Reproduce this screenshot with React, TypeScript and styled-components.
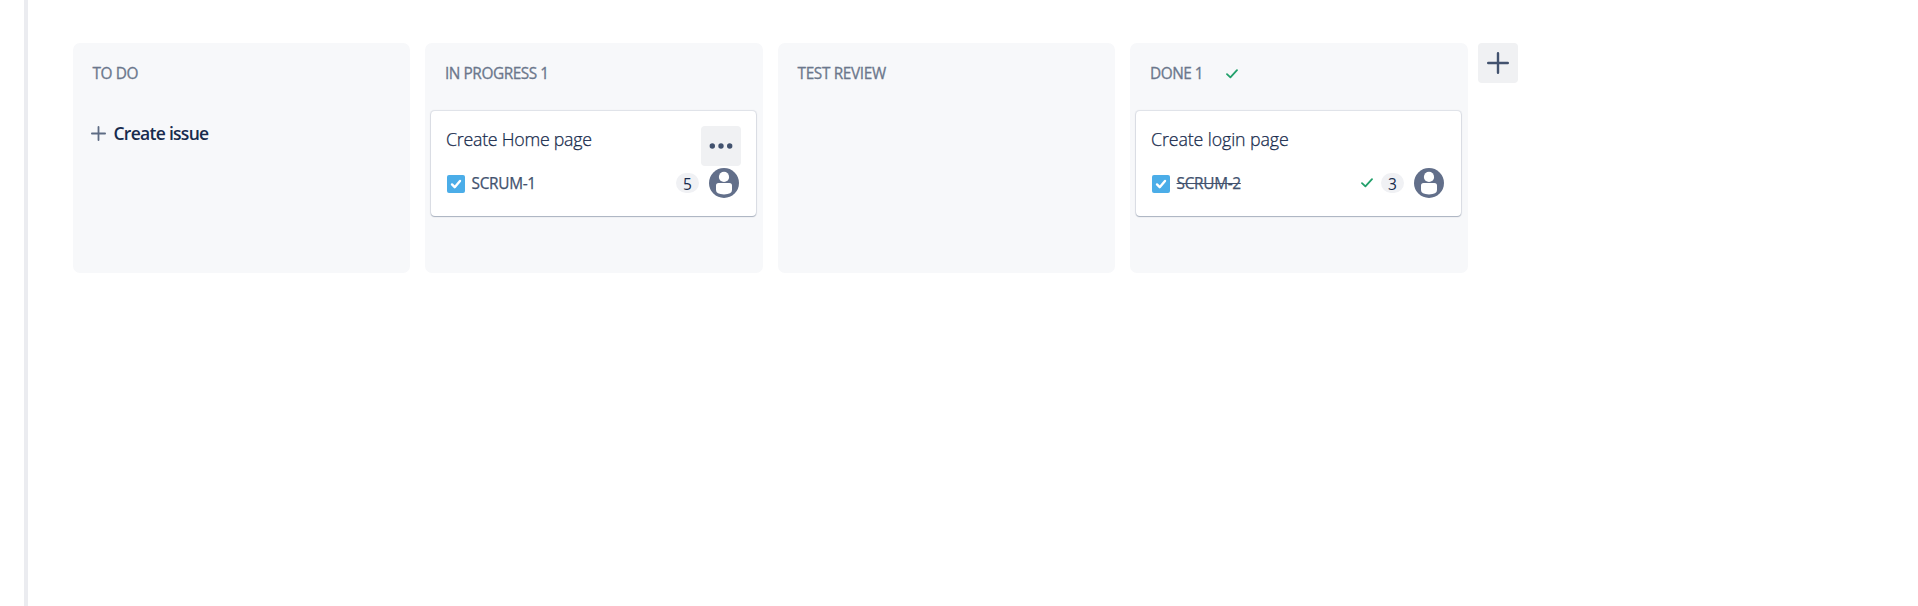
import React from "react";
import styled, { createGlobalStyle } from "styled-components";

const GlobalStyle = createGlobalStyle`
  * { box-sizing: border-box; }
  body {
    margin: 0;
    background: #fff;
    color: #172b4d;
    font-family: "Open Sans", "Noto Sans", sans-serif;
    overflow: hidden;
  }
  svg { display: block; flex: none; }
`;

const Page = styled.div`
  display: flex;
  height: 606px;
  padding-left: 24px;
`;

const SidebarEdge = styled.div`
  flex: none;
  width: 4px;
  background: #ebecf0;
`;

const Board = styled.main`
  display: flex;
  align-items: flex-start;
  padding: 43px 0 0 44.5px;
`;

const Columns = styled.div`
  display: flex;
  gap: 15px;
`;

const Column = styled.section`
  flex: none;
  width: 337.5px;
  height: 229.5px;
  padding: 0 6.5px 0 5.5px;
  border-radius: 7px;
  background: #f7f8fa;
`;

const ColumnHeader = styled.header`
  display: flex;
  align-items: center;
  height: 62px;
  padding-left: 14.5px;
`;

const ColumnTitle = styled.h2<{ $spacing: number }>`
  margin: 0 23px 0 0;
  color: #6b778c;
  font-size: 15.4px;
  font-weight: 400;
  line-height: 20px;
  letter-spacing: ${(p) => p.$spacing}px;
  white-space: nowrap;
  -webkit-text-stroke: 0.3px #6b778c;
`;

const CreateIssue = styled.button`
  display: flex;
  align-items: center;
  gap: 7.5px;
  height: 40px;
  margin-top: 8px;
  padding: 0 0 0 13px;
  border: 0;
  background: none;
  color: #172b4d;
  font: 600 17.5px/24px "Open Sans", "Noto Sans", sans-serif;
  letter-spacing: -0.72px;
`;

const Card = styled.article`
  height: 104.5px;
  margin-top: 6px;
  padding: 15px 15px 0 15.5px;
  border-radius: 4px;
  background: #fff;
  box-shadow: 0 1px 1px rgba(9, 30, 66, 0.25), 0 0 1px 0.5px rgba(9, 30, 66, 0.1);
`;

const CardTop = styled.div`
  display: flex;
  justify-content: space-between;
  height: 41px;
`;

const CardTitle = styled.h3<{ $spacing: number }>`
  margin: 1px 0 0;
  color: #172b4d;
  font-size: 17.8px;
  font-weight: 300;
  line-height: 24px;
  letter-spacing: ${(p) => p.$spacing}px;
  white-space: nowrap;
  -webkit-text-stroke: 0.25px #172b4d;
`;

const IconButton = styled.button`
  display: flex;
  flex: none;
  align-items: center;
  justify-content: center;
  width: 40px;
  height: 40px;
  padding: 0;
  border: 0;
  border-radius: 4px;
  background: #f0f1f3;
`;

const CardFooter = styled.footer`
  display: flex;
  align-items: center;
  height: 32px;
  padding: 0 2px 0 1px;
`;

const IssueKey = styled.span<{ $done?: boolean }>`
  margin: 1px auto 0 6.5px;
  color: #42526e;
  font-size: 15.4px;
  font-weight: 400;
  line-height: 20px;
  letter-spacing: -0.3px;
  text-decoration: ${(p) => (p.$done ? "line-through" : "none")};
  -webkit-text-stroke: 0.25px #42526e;
`;

const Estimate = styled.span`
  width: 23px;
  height: 20px;
  margin: 0 10px 0 8px;
  border-radius: 10px;
  background: #f0f1f4;
  font-size: 15.5px;
  line-height: 22px;
  text-align: center;
`;

const AddColumn = styled(IconButton)`
  margin-left: 10px;
`;

const Check = () => (
  <svg width="12" height="10" viewBox="0 0 12 10" fill="none">
    <path d="M1 5.2 4.4 8.4 11 1.2" stroke="#22a06b" strokeWidth="1.8" strokeLinecap="round" strokeLinejoin="round" />
  </svg>
);

const Plus = ({ size, weight, color }: { size: number; weight: number; color: string }) => (
  <svg width={size} height={size} viewBox={`0 0 ${size} ${size}`} fill="none">
    <path
      d={`M${size / 2} ${weight / 2}V${size - weight / 2}M${weight / 2} ${size / 2}H${size - weight / 2}`}
      stroke={color}
      strokeWidth={weight}
      strokeLinecap="round"
    />
  </svg>
);

const TaskIcon = () => (
  <svg width="18" height="20" viewBox="0 -2 18 20" fill="none">
    <rect width="18" height="18" rx="2" fill="#4bade8" />
    <path d="M5 9.4 7.7 12.2 13 5.9" stroke="#fff" strokeWidth="2.4" strokeLinecap="round" strokeLinejoin="round" />
  </svg>
);

const Dots = () => (
  <svg width="24" height="6" viewBox="0 0 24 6" fill="#42526e">
    <circle cx="3.3" cy="3" r="2.7" />
    <circle cx="12" cy="3" r="2.7" />
    <circle cx="20.7" cy="3" r="2.7" />
  </svg>
);

const Avatar = () => (
  <svg width="30" height="30" viewBox="0 0 30 30">
    <circle cx="15" cy="15" r="15" fill="#626f8a" />
    <circle cx="15" cy="8.9" r="5.1" fill="#fff" />
    <path d="M7 17.6Q7 15 9.6 15H20.4Q23 15 23 17.6V22Q23 26.4 15 26.4T7 22Z" fill="#fff" />
  </svg>
);

type Issue = { title: string; spacing: number; issueKey: string; points: number; done?: boolean; menu?: boolean };

const IssueCard = ({ title, spacing, issueKey, points, done, menu }: Issue) => (
  <Card>
    <CardTop>
      <CardTitle $spacing={spacing}>{title}</CardTitle>
      {menu && (
        <IconButton aria-label="More actions">
          <Dots />
        </IconButton>
      )}
    </CardTop>
    <CardFooter>
      <TaskIcon />
      <IssueKey $done={done}>{issueKey}</IssueKey>
      {done && <Check />}
      <Estimate>{points}</Estimate>
      <Avatar />
    </CardFooter>
  </Card>
);

export default function App() {
  return (
    <>
      <GlobalStyle />
      <Page>
        <SidebarEdge />
        <Board>
          <Columns>
            <Column>
              <ColumnHeader>
                <ColumnTitle $spacing={-0.4}>TO DO</ColumnTitle>
              </ColumnHeader>
              <CreateIssue>
                <Plus size={15} weight={1.8} color="#5e6c84" />
                Create issue
              </CreateIssue>
            </Column>
            <Column>
              <ColumnHeader>
                <ColumnTitle $spacing={-0.45}>IN PROGRESS 1</ColumnTitle>
              </ColumnHeader>
              <IssueCard title="Create Home page" spacing={-0.25} issueKey="SCRUM-1" points={5} menu />
            </Column>
            <Column>
              <ColumnHeader>
                <ColumnTitle $spacing={-0.35}>TEST REVIEW</ColumnTitle>
              </ColumnHeader>
            </Column>
            <Column>
              <ColumnHeader>
                <ColumnTitle $spacing={-0.5}>DONE 1</ColumnTitle>
                <Check />
              </ColumnHeader>
              <IssueCard title="Create login page" spacing={-0.1} issueKey="SCRUM-2" points={3} done />
            </Column>
          </Columns>
          <AddColumn aria-label="Add column">
            <Plus size={22} weight={2.4} color="#42526e" />
          </AddColumn>
        </Board>
      </Page>
    </>
  );
}
